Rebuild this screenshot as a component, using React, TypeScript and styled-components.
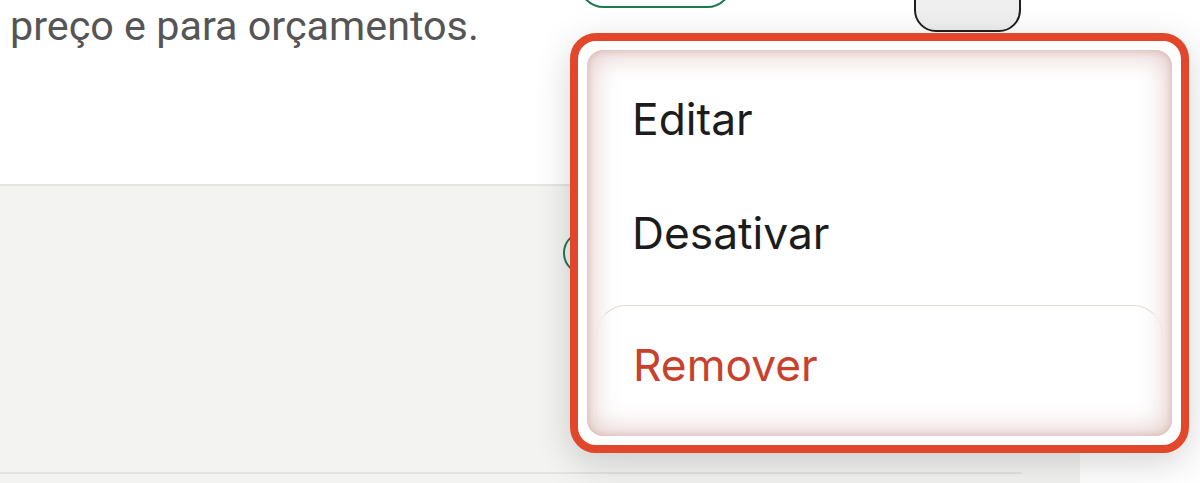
import React from 'react';
import styled, { createGlobalStyle } from 'styled-components';

const GlobalStyle = createGlobalStyle`
  html, body {
    margin: 0;
    padding: 0;
    background: #ffffff;
    overflow: hidden;
  }
`;

const Page = styled.div`
  position: relative;
  display: grid;
  grid-template-columns: 1080px 1fr;
  width: 1200px;
  height: 483px;
  overflow: hidden;
  font-family: Roboto, 'Liberation Sans', sans-serif;
`;

const Main = styled.div`
  display: flex;
  flex-direction: column;
  background: #f3f3f1;
`;

const Side = styled.div`
  background: #ffffff;
`;

const TopSection = styled.section`
  display: flex;
  justify-content: space-between;
  align-items: flex-start;
  height: 186px;
  flex-shrink: 0;
  box-sizing: border-box;
  padding-left: 10px;
  background: #ffffff;
  border-bottom: 2px solid #e6e5df;
`;

const Description = styled.p`
  margin: 2px 0 0;
  font-size: 41.3px;
  line-height: 48px;
  color: #555555;
`;

const Actions = styled.div`
  display: flex;
  align-items: flex-start;
  gap: 181px;
  padding-right: 59px;
`;

const OutlineButton = styled.button<{ $tone: 'green' | 'dark'; $shift: number }>`
  box-sizing: border-box;
  height: 60px;
  margin-top: ${(p) => p.$shift}px;
  width: ${(p) => (p.$tone === 'green' ? 155 : 107)}px;
  border: 2px solid ${(p) => (p.$tone === 'green' ? '#1f7a52' : '#1f1f1f')};
  border-radius: ${(p) => (p.$tone === 'green' ? 26 : 22)}px;
  background: ${(p) => (p.$tone === 'green' ? '#ffffff' : '#efefef')};
`;

const LowerSection = styled.section`
  box-sizing: border-box;
  height: 288px;
  flex-shrink: 0;
  padding-right: 58px;
`;

const Row = styled.div`
  display: flex;
  justify-content: flex-end;
  align-items: flex-start;
  box-sizing: border-box;
  height: 100%;
  padding: 45px 415px 0 0;
  border-bottom: 2px solid #e4e3dd;
`;

const Radio = styled.span`
  display: block;
  width: 44px;
  height: 44px;
  box-sizing: border-box;
  border: 2px solid #1f7a52;
  border-radius: 50%;
`;

const Highlight = styled.div`
  position: absolute;
  left: 570px;
  top: 33px;
  width: 619px;
  height: 420px;
  box-sizing: border-box;
  padding: 9px;
  border: 8px solid #e2462b;
  border-radius: 26px;
  background: #ffffff;
  box-shadow: 0 10px 36px rgba(0, 0, 0, 0.17);
  z-index: 5;
`;

const Menu = styled.ul`
  display: flex;
  flex-direction: column;
  height: 100%;
  margin: 0;
  padding: 12px 0 0;
  box-sizing: border-box;
  list-style: none;
  border-radius: 16px;
  background: #ffffff;
  box-shadow: inset 0 0 6px 1px rgba(185, 130, 125, 0.35),
    inset 0 0 26px 6px rgba(195, 145, 140, 0.45);
  font-family: Inter, 'Noto Sans', sans-serif;
  overflow: hidden;
`;

const MenuItem = styled.li<{ $danger?: boolean }>`
  padding: 31px 45px;
  font-size: 44.3px;
  line-height: 52px;
  color: ${(p) => (p.$danger ? '#c9412c' : '#1c1c1c')};
`;

const DangerGroup = styled.div`
  flex: 1;
  margin: 15px 9px 0;
  border: 1px solid #e0ddd7;
  border-bottom: none;
  border-left-color: rgba(224, 221, 215, 0.3);
  border-right-color: rgba(224, 221, 215, 0.3);
  border-radius: 30px 30px 0 0;

  ${MenuItem} {
    padding: 33px 36px 0;
  }
`;

export default function App() {
  return (
    <>
      <GlobalStyle />
      <Page>
        <Main>
          <TopSection>
            <Description>preço e para orçamentos.</Description>
            <Actions>
              <OutlineButton $tone="green" $shift={-52} />
              <OutlineButton $tone="dark" $shift={-28} />
            </Actions>
          </TopSection>
          <LowerSection>
            <Row>
              <Radio />
            </Row>
          </LowerSection>
        </Main>
        <Side />
        <Highlight>
          <Menu>
            <MenuItem>Editar</MenuItem>
            <MenuItem>Desativar</MenuItem>
            <DangerGroup>
              <MenuItem $danger>Remover</MenuItem>
            </DangerGroup>
          </Menu>
        </Highlight>
      </Page>
    </>
  );
}
